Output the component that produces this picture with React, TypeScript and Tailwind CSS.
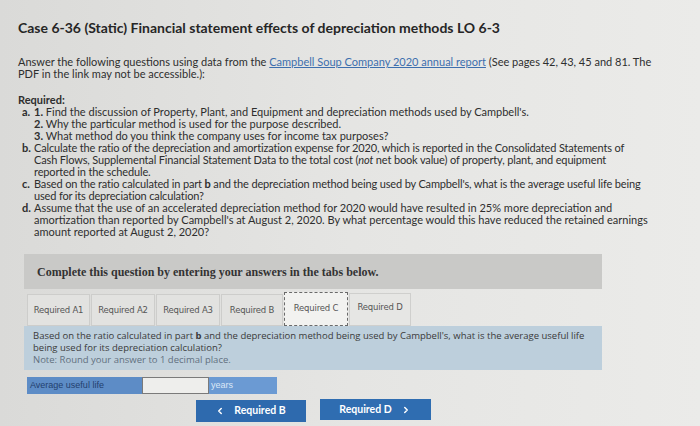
import React from 'react';
import { ChevronLeft, ChevronRight } from 'lucide-react';

const tabs = ['Required A1', 'Required A2', 'Required A3', 'Required B', 'Required C', 'Required D'];
const tabWidths = ['w-[63px]', 'w-[64px]', 'w-[64px]', 'w-[62px]', 'w-[64px]', 'w-[62px]'];

const App: React.FC = () => {
  return (
    <div className="w-[700px] h-[426px] overflow-hidden bg-gradient-to-r from-[#dadad8] via-[#e5e5e3] to-[#ebebe9] text-[#2e2e2e] font-['Lato','Liberation_Sans',sans-serif]">
      <div className="pl-[18px] pt-[19px]">
        {/* Заголовок */}
        <h1 className="text-[14px] leading-[18px] font-bold text-[#262626]">
          Case 6-36 (Static) Financial statement effects of depreciation methods LO 6-3
        </h1>

        <div className="mt-[19px] text-[11px] leading-[12px] whitespace-nowrap">
          <div>
            Answer the following questions using data from the{' '}
            <span className="text-[#3d6fae] underline">Campbell Soup Company 2020 annual report</span> (See pages 42, 43, 45 and 81. The
          </div>
          <div>PDF in the link may not be accessible.):</div>
        </div>

        <div className="mt-[14px] text-[11px] leading-[12px] whitespace-nowrap">
          <div className="font-bold">Required:</div>
          <div className="flex">
            <span className="w-[16px] pl-[4px] font-bold shrink-0">a.</span>
            <div>
              <div><b>1.</b> Find the discussion of Property, Plant, and Equipment and depreciation methods used by Campbell's.</div>
              <div><b>2.</b> Why the particular method is used for the purpose described.</div>
              <div><b>3.</b> What method do you think the company uses for income tax purposes?</div>
            </div>
          </div>
          <div className="flex">
            <span className="w-[16px] pl-[4px] font-bold shrink-0">b.</span>
            <div className="tracking-[-0.15px]">
              <div>Calculate the ratio of the depreciation and amortization expense for 2020, which is reported in the Consolidated Statements of</div>
              <div>Cash Flows, Supplemental Financial Statement Data to the total cost (<i>not</i> net book value) of property, plant, and equipment</div>
              <div>reported in the schedule.</div>
            </div>
          </div>
          <div className="flex">
            <span className="w-[16px] pl-[4px] font-bold shrink-0">c.</span>
            <div className="tracking-[-0.15px]">
              <div>Based on the ratio calculated in part <b>b</b> and the depreciation method being used by Campbell's, what is the average useful life being</div>
              <div>used for its depreciation calculation?</div>
            </div>
          </div>
          <div className="flex">
            <span className="w-[16px] pl-[4px] font-bold shrink-0">d.</span>
            <div>
              <div>Assume that the use of an accelerated depreciation method for 2020 would have resulted in 25% more depreciation and</div>
              <div>amortization than reported by Campbell's at August 2, 2020. By what percentage would this have reduced the retained earnings</div>
              <div>amount reported at August 2, 2020?</div>
            </div>
          </div>
        </div>

        {/* Блок с вкладками */}
        <div className="ml-[6px] mt-[16px] w-[578px]">
          <div className="h-[35px] bg-[#c9c9c7] flex items-center pl-[13px] font-['Liberation_Serif',serif] font-bold text-[12px] text-[#333]">
            Complete this question by entering your answers in the tabs below.
          </div>

          <div className="mt-[4px] ml-[3px] flex items-end gap-[1px] h-[33px]">
            {tabs.map((t, i) => {
              const active = i === 4;
              return (
                <div
                  key={t}
                  className={`${tabWidths[i]} flex items-center justify-center font-['DejaVu_Sans',sans-serif] text-[8.5px] tracking-[-0.2px] text-[#555] ${
                    active
                      ? 'h-[34px] bg-[#f2f2f0] border border-dashed border-[#6a6a6a] pb-[2px]'
                      : i === 5
                        ? 'h-[33px] bg-[#e6e6e4] border border-[#cfcfcd] pb-[4px]'
                        : 'h-[32px] bg-[#e2e2e0] border border-[#cdcdcb]'
                  }`}
                >
                  {t}
                </div>
              );
            })}
          </div>

          <div className="h-[44px] bg-[#bdcfdc] pl-[9px] pt-[4px] font-['Open_Sans',sans-serif] text-[9.5px] leading-[12px] text-[#3a3a3a] whitespace-nowrap">
            <div>
              Based on the ratio calculated in part <b>b</b> and the depreciation method being used by Campbell's, what is the average useful life
            </div>
            <div>being used for its depreciation calculation?</div>
            <div className="text-[#62707e]">Note: Round your answer to 1 decimal place.</div>
          </div>

          <div className="mt-[7px] ml-[3px] flex h-[17px] font-['Liberation_Sans',sans-serif] text-[9px]">
            <div className="w-[115px] bg-[#5d8cc6] text-[#23406e] pl-[3px] flex items-center">Average useful life</div>
            <div className="w-[67px] bg-[#eeeeec] border border-[#7a7a7a]" />
            <div className="w-[68px] bg-[#6b9ad3] text-[#dce8f6] pl-[2px] flex items-center">years</div>
          </div>

          <div className="mt-[5px] flex justify-center gap-[14px] font-['Lato',sans-serif] font-bold text-[10.5px] text-white">
            <div className="w-[110px] h-[22px] bg-[#2e6aae] flex items-center justify-center gap-[9px] mt-[1px]">
              <ChevronLeft className="w-[10px] h-[10px]" strokeWidth={3.5} />
              <span>Required B</span>
            </div>
            <div className="w-[111px] h-[21px] bg-[#2f6db1] flex items-center justify-center gap-[9px]">
              <span>Required D</span>
              <ChevronRight className="w-[10px] h-[10px]" strokeWidth={3.5} />
            </div>
          </div>
        </div>
      </div>
    </div>
  );
};

export default App;
